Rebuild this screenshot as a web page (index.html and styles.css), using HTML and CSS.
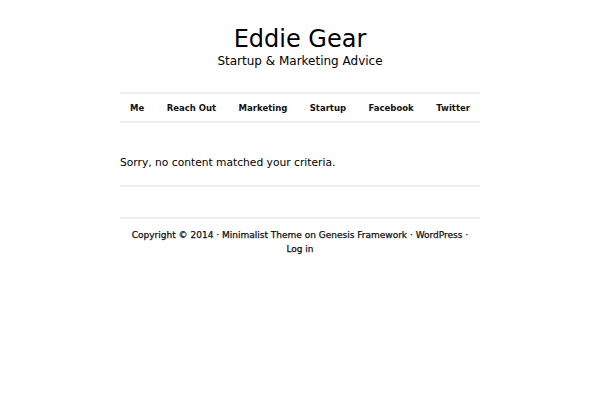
FILE: index.html
```html
<!DOCTYPE html>
<html>
<head>
<meta charset="utf-8">
<link rel="stylesheet" href="styles.css">
</head>
<body>
<div class="wrap">
  <header class="site-header">
    <h1 class="site-title">Eddie Gear</h1>
    <p class="site-desc">Startup &amp; Marketing Advice</p>
  </header>
  <nav class="nav">
    <a>Me</a>
    <a>Reach Out</a>
    <a>Marketing</a>
    <a>Startup</a>
    <a>Facebook</a>
    <a>Twitter</a>
  </nav>
  <main class="content">
    <p class="entry">Sorry, no content matched your criteria.</p>
  </main>
  <footer class="footer">
    <p>Copyright © 2014 · Minimalist Theme on Genesis Framework · WordPress · Log in</p>
  </footer>
</div>
</body>
</html>
```
FILE: styles.css
```css
html, body {
  margin: 0;
  padding: 0;
  background: #fff;
}
body {
  font-family: "DejaVu Sans", sans-serif;
  color: #000;
}
.wrap {
  width: 360px;
  margin: 0 auto;
}
.site-header {
  text-align: center;
  padding-top: 26px;
}
.site-title {
  margin: 0;
  font-size: 24px;
  font-weight: normal;
  line-height: 27px;
}
.site-desc {
  margin: 0;
  font-size: 12px;
  line-height: 16px;
}
.nav {
  margin-top: 23px;
  border-top: 2px solid #eee;
  border-bottom: 2px solid #eee;
  height: 27px;
  display: flex;
  justify-content: space-between;
  align-items: center;
  padding: 0 10px;
  font-size: 8.5px;
  font-weight: bold;
  color: #111;
}
.content {
  padding-top: 32px;
  border-bottom: 2px solid #eee;
}
.entry {
  margin: 0 0 14px 0;
  font-size: 10.7px;
  line-height: 16px;
}
.footer {
  margin-top: 30px;
  border-top: 2px solid #eee;
  padding-top: 9px;
  text-align: center;
}
.footer p {
  margin: 0;
  font-size: 9px;
  color: #111;
  -webkit-text-stroke: 0.25px #111;
  line-height: 14px;
  padding: 0 10px;
}
```
